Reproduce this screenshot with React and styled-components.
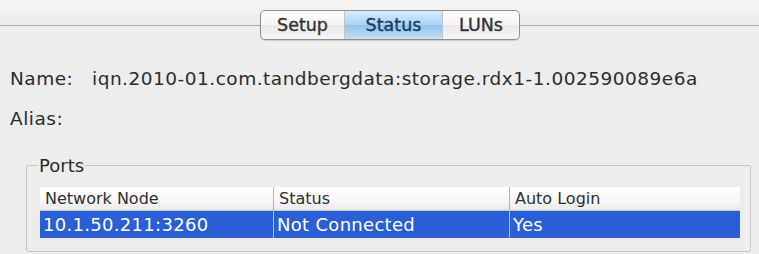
import React from "react"
import styled, { createGlobalStyle } from "styled-components"

const Global = createGlobalStyle`
  html, body {
    margin: 0;
    padding: 0;
    background: #ededed;
  }
  body {
    font-family: "DejaVu Sans", "Liberation Sans", sans-serif;
    color: #2a2a2a;
  }
`

const Page = styled.div`
  width: 759px;
  height: 254px;
  overflow: hidden;
  background: #ededed;
`

const TabBar = styled.div`
  display: flex;
  align-items: center;
  height: 30px;
  padding-top: 10px;
  background: linear-gradient(#f3f3f3 0, #f3f3f3 15px, #ededed 15px);
`

const Rule = styled.div`
  flex: ${p => (p.$w ? `0 0 ${p.$w}px` : "1")};
  height: 1px;
  background: #a9a9a9;
`

const Segmented = styled.div`
  display: flex;
  height: 28px;
  border: 1px solid #8e8e8e;
  border-radius: 5px;
  overflow: hidden;
  background: linear-gradient(#ffffff, #f3f3f3 50%, #e9e9e9 51%, #f6f6f6);
  box-shadow: 0 1px 1px rgba(0, 0, 0, 0.15);
`

const Segment = styled.div`
  width: ${p => p.$w}px;
  display: flex;
  align-items: center;
  justify-content: center;
  font-size: 17.5px;
  font-weight: 500;
  color: ${p => (p.$active ? "#1c3a5e" : "#333333")};
  -webkit-text-stroke: 0.35px currentColor;
  background: ${p =>
    p.$active
      ? "linear-gradient(#d6ebfb, #a9d3f4 50%, #8ec4ef 51%, #c4e2f8)"
      : "transparent"};
  border-left: ${p => (p.$first ? "none" : "1px solid #c4c4c4")};
`

const Body = styled.div`
  padding: 0 8px 0 10px;
`

const Field = styled.div`
  display: flex;
  align-items: center;
  height: ${p => p.$h || 41}px;
  font-size: 18.5px;
  letter-spacing: 0.5px;
  color: #2c2c2c;
`

const Label = styled.span`
  width: 82px;
  flex: none;
`

const Group = styled.fieldset`
  margin: 17px 0 0 16px;
  padding: 11px 10px 13px 13px;
  border: 1px solid #c4c4c4;
  border-radius: 2px;
`

const Legend = styled.legend`
  padding: 0 1px;
  margin-left: -2px;
  font-size: 18px;
  color: #2c2c2c;
`

const Grid = styled.div`
  display: grid;
  grid-template-columns: 233px 236px 1fr;
`

const Head = styled.div`
  height: 23px;
  display: flex;
  align-items: center;
  padding-left: 5px;
  font-size: 16px;
  color: #2f2f2f;
  background: linear-gradient(#ffffff, #f7f7f7 60%, #e9e9e9);
  border-bottom: 1px solid #c9c9c9;
  border-left: ${p => (p.$first ? "none" : "1px solid #b5b5b5")};
`

const Cell = styled.div`
  height: 27px;
  display: flex;
  align-items: center;
  padding-left: 3px;
  font-size: 18px;
  letter-spacing: 0.3px;
  color: #ffffff;
  background: #2a5fd5;
  border-left: ${p => (p.$first ? "none" : "1px solid #a9c2f0")};
`

const ports = [{ node: "10.1.50.211:3260", status: "Not Connected", login: "Yes" }]

export default function App() {
  return (
    <Page>
      <Global />
      <TabBar>
        <Rule $w={260} />
        <Segmented>
          <Segment $w={83} $first>Setup</Segment>
          <Segment $w={97} $active>Status</Segment>
          <Segment $w={76}>LUNs</Segment>
        </Segmented>
        <Rule />
      </TabBar>
      <Body>
        <Field style={{ marginTop: 18 }}>
          <Label>Name:</Label>
          <span>iqn.2010-01.com.tandbergdata:storage.rdx1-1.002590089e6a</span>
        </Field>
        <Field $h={39}>
          <Label>Alias:</Label>
        </Field>
        <Group>
          <Legend>Ports</Legend>
          <Grid>
            <Head $first>Network Node</Head>
            <Head>Status</Head>
            <Head>Auto Login</Head>
            {ports.map(p => (
              <React.Fragment key={p.node}>
                <Cell $first>{p.node}</Cell>
                <Cell>{p.status}</Cell>
                <Cell>{p.login}</Cell>
              </React.Fragment>
            ))}
          </Grid>
        </Group>
      </Body>
    </Page>
  )
}
